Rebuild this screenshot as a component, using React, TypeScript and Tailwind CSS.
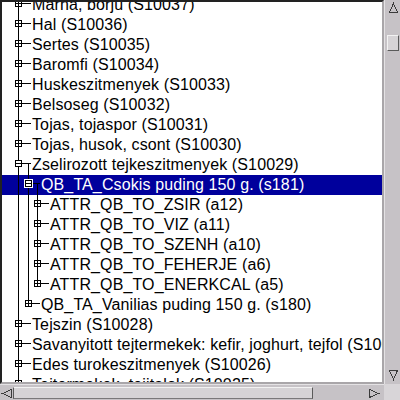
type Row = {
  level: 1 | 2 | 3;
  text: string;
  open?: boolean;
  selected?: boolean;
};

const rows: Row[] = [
  { level: 1, text: 'Marha, borju (S10037)' },
  { level: 1, text: 'Hal (S10036)' },
  { level: 1, text: 'Sertes (S10035)' },
  { level: 1, text: 'Baromfi (S10034)' },
  { level: 1, text: 'Huskeszitmenyek (S10033)' },
  { level: 1, text: 'Belsoseg (S10032)' },
  { level: 1, text: 'Tojas, tojaspor (S10031)' },
  { level: 1, text: 'Tojas, husok, csont (S10030)' },
  { level: 1, text: 'Zselirozott tejkeszitmenyek (S10029)', open: true },
  { level: 2, text: 'QB_TA_Csokis puding 150 g. (s181)', open: true, selected: true },
  { level: 3, text: 'ATTR_QB_TO_ZSIR (a12)' },
  { level: 3, text: 'ATTR_QB_TO_VIZ (a11)' },
  { level: 3, text: 'ATTR_QB_TO_SZENH (a10)' },
  { level: 3, text: 'ATTR_QB_TO_FEHERJE (a6)' },
  { level: 3, text: 'ATTR_QB_TO_ENERKCAL (a5)' },
  { level: 2, text: 'QB_TA_Vanilias puding 150 g. (s180)' },
  { level: 1, text: 'Tejszin (S10028)' },
  { level: 1, text: 'Savanyitott tejtermekek: kefir, joghurt, tejfol (S10027)' },
  { level: 1, text: 'Edes turokeszitmenyek (S10026)' },
  { level: 1, text: 'Tejtermekek, tejitalok (S10025)' },
];

const textX = { 1: 30, 2: 39, 3: 48 };
const boxX = { 1: 16, 2: 26, 3: 35 };
const MID = 8;

// vertical guide segments for one row: [x, y1, y2]
function guides(i: number): [number, number, number][] {
  const s: [number, number, number][] = [[16, 0, 20]];
  if (i === 8) s.push([26, MID, 20]);
  if (i >= 9 && i <= 14) s.push([26, 0, 20]);
  if (i === 15) s.push([26, 0, MID]);
  if (i === 9) s.push([35, MID, 20]);
  if (i >= 10 && i <= 13) s.push([35, 0, 20]);
  if (i === 14) s.push([35, 0, MID]);
  return s;
}

function Gutter({ i, row }: { i: number; row: Row }) {
  const w = textX[row.level];
  const cx = boxX[row.level];
  return (
    <svg width={w} height={20} className="shrink-0" shapeRendering="crispEdges">
      {guides(i).map(([x, y1, y2], k) => (
        <line key={k} x1={x + 0.5} x2={x + 0.5} y1={y1} y2={y2} stroke="#000" />
      ))}
      <line x1={cx + 4} x2={w - 1} y1={MID + 0.5} y2={MID + 0.5} stroke="#000" />
      {row.selected && <rect x={cx - 4} y={MID - 4} width={9} height={9} fill="#fff" />}
      <rect x={cx - 3 + 0.5} y={MID - 3 + 0.5} width={6} height={6} fill="#fff" stroke="#000" />
      <line x1={cx - 3} x2={cx + 4} y1={MID + 0.5} y2={MID + 0.5} stroke="#000" />
      {!row.open && (
        <line x1={cx + 0.5} x2={cx + 0.5} y1={MID - 3} y2={MID + 4} stroke="#000" />
      )}
    </svg>
  );
}

function Arrow({ dir }: { dir: 'up' | 'down' | 'left' | 'right' }) {
  const pts = {
    up: '4.5,10.5 8.5,1.5 12.5,10.5',
    down: '4.5,1.5 8.5,10.5 12.5,1.5',
    left: '10.5,4.5 1.5,8.5 10.5,12.5',
    right: '1.5,4.5 10.5,8.5 1.5,12.5',
  }[dir];
  const vertical = dir === 'up' || dir === 'down';
  return (
    <svg width={vertical ? 16 : 12} height={vertical ? 12 : 16} className="shrink-0" shapeRendering="crispEdges">
      <polygon points={pts} fill="none" stroke="#3a3a3a" />
    </svg>
  );
}

export default function App() {
  return (
    <div
      className="grid grid-cols-[1fr_16px] grid-rows-[1fr_16px] w-[400px] h-[400px] bg-[#c6c2c6] overflow-hidden"
      style={{ fontFamily: '"Liberation Sans", Arial, sans-serif' }}
    >
      {/* Tree panel */}
      <div className="bg-white border-l-2 border-t-2 border-l-[#222] border-t-[#222] border-r-2 border-b-2 border-r-[#a9a6a9] border-b-[#a9a6a9] overflow-hidden">
        <div className="-mt-[7px]">
          {rows.map((row, i) => (
            <div
              key={i}
              className={`flex items-start h-[20px] whitespace-nowrap text-[16px] leading-[20px] tracking-[0.12px] ${
                row.selected ? 'bg-[#00009c] text-white' : 'text-black'
              }`}
            >
              <Gutter i={i} row={row} />
              <span>{row.text}</span>
            </div>
          ))}
        </div>
      </div>

      {/* Vertical scrollbar */}
      <div className="flex flex-col items-center border-l border-[#e4e2e4] bg-[#c6c2c6]">
        <div className="mt-[2px]">
          <Arrow dir="up" />
        </div>
        <div className="mt-[21px] w-[12px] h-[16px] bg-[#d6d3d6] border-t border-l border-[#f2f2f2] border-r-[#5a5a5a] border-b-[#5a5a5a] border-r border-b" />
        <div className="flex-1" />
        <div className="mb-[3px]">
          <Arrow dir="down" />
        </div>
      </div>

      {/* Horizontal scrollbar */}
      <div className="flex items-center border-t border-[#e4e2e4] bg-[#c6c2c6]">
        <div className="ml-[1px]">
          <Arrow dir="left" />
        </div>
        <div className="w-[300px] h-[12px] bg-[#d6d3d6] border-t border-l border-t-[#f2f2f2] border-l-[#5a5a5a] border-r border-b border-r-[#5a5a5a] border-b-[#7a787a]" />
        <div className="flex-1" />
        <div className="mr-[4px]">
          <Arrow dir="right" />
        </div>
      </div>

      {/* Corner */}
      <div className="bg-[#d8d5d8]" />
    </div>
  );
}
